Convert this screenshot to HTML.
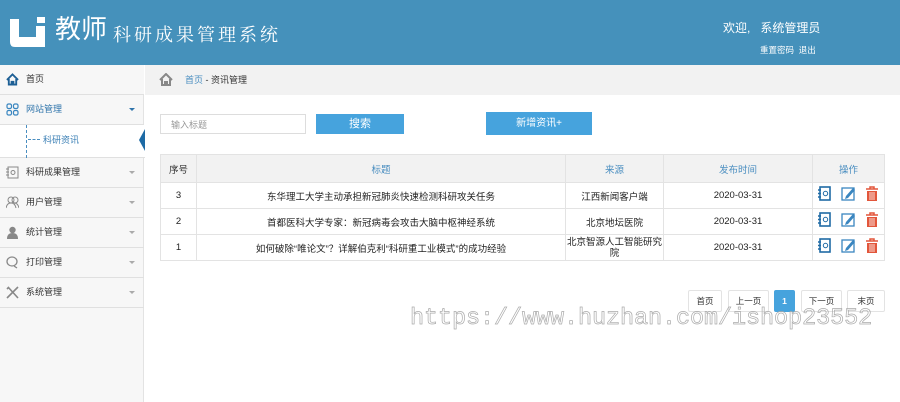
<!DOCTYPE html>
<html><head><meta charset="utf-8"><style>
*{margin:0;padding:0;box-sizing:border-box}
body{width:900px;height:402px;overflow:hidden;background:#fff;font-family:"Liberation Sans","Noto Sans CJK SC",sans-serif;font-size:9px;color:#333;position:relative}
.hd{position:absolute;left:0;top:0;width:900px;height:65px;background:#4591bb;color:#fff}
.logo{position:absolute;left:10px;top:17px;width:38px;height:30px}
.t1{position:absolute;left:55px;top:13px;font-size:26px;line-height:32px}
.t2{position:absolute;left:113px;top:21px;font-size:18px;letter-spacing:3px;font-family:"Noto Serif CJK SC",serif;line-height:26px}
.wel{position:absolute;left:723px;top:19px;font-size:12px}
.lk{position:absolute;left:760px;top:44px;font-size:8.5px}
.sb{position:absolute;left:0;top:65px;width:144px;height:337px;background:#f7f7f7;border-right:1px solid #e3e3e3}
.it{position:absolute;left:0;width:144px;height:30px;border-bottom:1px solid #e0e0e0;font-size:9px;line-height:29px;padding-left:26px;color:#333}
.it .ar{position:absolute;right:9px;top:13px;width:0;height:0;border-left:3px solid transparent;border-right:3px solid transparent;border-top:3px solid #aaa}
.ic{position:absolute;left:6px;top:8px;width:13px;height:13px}
.sub{position:absolute;left:0;top:125px;width:145px;height:33px;background:#fff;border-bottom:1px solid #e0e0e0}
.bc{position:absolute;left:145px;top:65px;width:755px;height:30px;background:#f2f2f2;font-size:9px;line-height:30px;padding-left:40px}
input{position:absolute;left:160px;top:114px;width:146px;height:20px;border:1px solid #ddd;font-size:9px;padding-left:10px;color:#999;font-family:inherit}
.btn{position:absolute;background:#46a3dd;color:#fff;text-align:center;font-size:11px}
table{position:absolute;left:160px;top:154px;width:725px;border-collapse:collapse;font-size:9.5px}
td,th{border:1px solid #e3e3e3;text-align:center;font-weight:normal}
th{height:28px;background:#f2f2f2;color:#4a8ec0}
th:first-child{color:#333}
td{height:26px;color:#222}
.pg{position:absolute;top:290px;height:22px;border:1px solid #e3e3e3;text-align:center;line-height:20px;font-size:8.5px;color:#333;border-radius:2px}
.wm{position:absolute;left:410px;top:305px;font-family:"Liberation Mono",monospace;font-size:23.5px;color:transparent;-webkit-text-stroke:0.7px #aaa;letter-spacing:-0.1px}
</style></head><body>
<div class="hd">
<svg class="logo" viewBox="0 0 38 30"><path d="M0 2h9v18h17v-11h9v21H5q-5 0-5-5z" fill="#fff"/><rect x="27" y="0" width="8" height="6" fill="#fff"/></svg>
<div class="t1">教师</div><div class="t2">科研成果管理系统</div>
<div class="wel">欢迎,&nbsp;&nbsp; 系统管理员</div>
<div class="lk">重置密码&nbsp; 退出</div>
</div>
<div class="sb"></div>
<div class="it" style="top:65px;background:#f7f7f7"><svg class="ic" viewBox="0 0 14 13"><path d="M1 7L7 1l6 6M3 6v6h3V9h2v3h3V6" fill="none" stroke="#1d5f95" stroke-width="2"/></svg>首页</div>
<div class="it" style="top:95px;color:#2f74ab;"><svg class="ic" viewBox="0 0 13 13"><g fill="none" stroke="#3a86c0" stroke-width="1.2"><rect x="1" y="1" width="4.5" height="4.5" rx="1.5"/><rect x="7.5" y="1" width="4.5" height="4.5" rx="1.5"/><rect x="1" y="7.5" width="4.5" height="4.5" rx="1.5"/><rect x="7.5" y="7.5" width="4.5" height="4.5" rx="1.5"/></g></svg>网站管理<span class="ar" style="border-top-color:#2f74ab"></span></div>
<div class="sub"><div style="position:absolute;left:26px;top:0;height:33px;border-left:1px dashed #4a8ec0"></div><div style="position:absolute;left:28px;top:14px;width:12px;border-top:1px dashed #4a8ec0"></div><div style="position:absolute;left:43px;top:8px;color:#3a7fb5">科研资讯</div><div style="position:absolute;left:139px;top:4px;width:0;height:0;border-top:11px solid transparent;border-bottom:11px solid transparent;border-right:6px solid #1d6aa5"></div></div>
<div class="it" style="top:158px"><svg class="ic" viewBox="0 0 13 13"><rect x="2" y="1" width="10" height="11" fill="none" stroke="#888"/><circle cx="7" cy="6.5" r="2" fill="none" stroke="#888"/><path d="M0 3h3M0 6h3M0 9h3" stroke="#888"/></svg>科研成果管理<span class="ar"></span></div>
<div class="it" style="top:188px"><svg class="ic" viewBox="0 0 13 13"><circle cx="5" cy="4" r="3" fill="none" stroke="#888"/><circle cx="9" cy="4" r="3" fill="none" stroke="#888"/><path d="M0 12q1-5 5-5t5 5M8 7q4 0 5 5" fill="none" stroke="#888"/></svg>用户管理<span class="ar"></span></div>
<div class="it" style="top:218px"><svg class="ic" viewBox="0 0 13 13"><circle cx="6.5" cy="4" r="3.2" fill="#888"/><path d="M1 13q0-6 5.5-6t5.5 6z" fill="#888"/></svg>统计管理<span class="ar"></span></div>
<div class="it" style="top:248px"><svg class="ic" viewBox="0 0 13 13"><ellipse cx="6" cy="5.5" rx="5" ry="4.5" fill="none" stroke="#888" stroke-width="1.3"/><path d="M8 10l3 2" stroke="#888" stroke-width="1.3"/></svg>打印管理<span class="ar"></span></div>
<div class="it" style="top:278px"><svg class="ic" viewBox="0 0 13 13"><path d="M1 12L12 1M2 1l10 11M1 3l2-2" stroke="#888" stroke-width="1.6"/></svg>系统管理<span class="ar"></span></div>
<div class="bc"><svg style="position:absolute;left:14px;top:8px" width="14" height="13" viewBox="0 0 14 13"><path d="M1 7L7 1l6 6M3 6v6h3V9h2v3h3V6" fill="none" stroke="#888" stroke-width="2"/></svg><span style="color:#4a8ec0">首页</span> - 资讯管理</div>
<input value="输入标题">
<div class="btn" style="left:316px;top:114px;width:88px;height:20px;line-height:20px">搜索</div>
<div class="btn" style="left:486px;top:112px;width:106px;height:23px;line-height:23px;font-size:10px">新增资讯+</div>
<table>
<tr><th style="width:36px">序号</th><th style="width:369px">标题</th><th style="width:98px">来源</th><th style="width:149px">发布时间</th><th>操作</th></tr>
<tr><td>3</td><td>东华理工大学主动承担新冠肺炎快速检测科研攻关任务</td><td>江西新闻客户端</td><td>2020-03-31</td><td class="op"></td></tr>
<tr><td>2</td><td>首都医科大学专家：新冠病毒会攻击大脑中枢神经系统</td><td>北京地坛医院</td><td>2020-03-31</td><td class="op"></td></tr>
<tr><td>1</td><td>如何破除“唯论文”？详解伯克利“科研重工业模式”的成功经验</td><td style="line-height:11px">北京智源人工智能研究院</td><td>2020-03-31</td><td class="op"></td></tr>
</table>
<svg style="position:absolute;left:818px;top:186px" width="64" height="72" viewBox="0 0 64 72">
<g id="r"><rect x="2" y="1" width="10" height="13" fill="none" stroke="#1f6aa5" stroke-width="1.6"/><path d="M0 4h3M0 7.5h3M0 11h3" stroke="#1f6aa5" stroke-width="1.5"/><circle cx="7.5" cy="7.5" r="2.2" fill="none" stroke="#1f6aa5"/>
<rect x="24" y="2" width="12" height="12" fill="none" stroke="#3a86c0" stroke-width="1.3"/><path d="M28 10l7-8 2 2-7 8-3 1z" fill="#3a86c0"/>
<path d="M48 3h12M52 3v-2h4v2" stroke="#e2563b" stroke-width="1.5" fill="none"/><rect x="49" y="5" width="10" height="10" fill="#e2563b"/><path d="M52 6v8M54 6v8M56 6v8" stroke="#fff" stroke-width=".8"/></g>
<use href="#r" y="26"/><use href="#r" y="52"/>
</svg>
<div class="pg" style="left:688px;width:34px">首页</div>
<div class="pg" style="left:728px;width:41px">上一页</div>
<div class="pg" style="left:774px;width:21px;background:#46a3dd;border-color:#46a3dd;color:#fff;font-weight:bold">1</div>
<div class="pg" style="left:801px;width:41px">下一页</div>
<div class="pg" style="left:847px;width:38px">末页</div>
<div class="wm">https://www.huzhan.com/ishop23552</div>
</body></html>
